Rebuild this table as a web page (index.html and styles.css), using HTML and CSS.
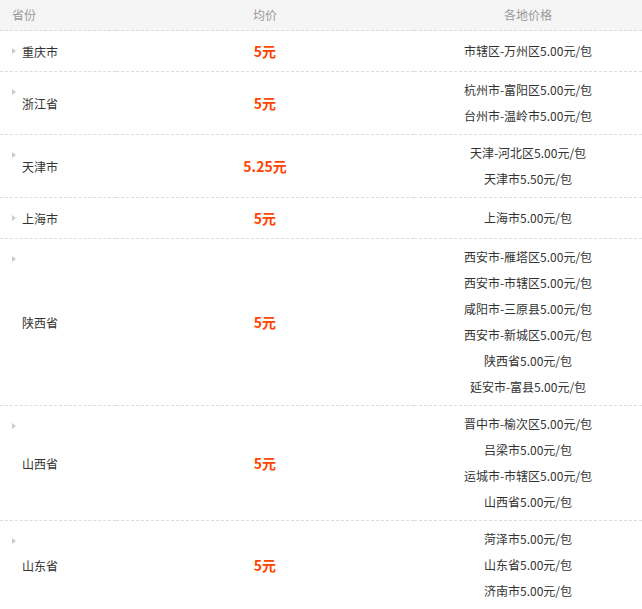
FILE: index.html
```html
<!DOCTYPE html>
<html lang="zh-CN">
<head>
<meta charset="utf-8">
<title>各地价格</title>
<link rel="stylesheet" href="styles.css">
</head>
<body>
<table class="price-table">
  <colgroup>
    <col class="c-prov">
    <col class="c-avg">
    <col class="c-list">
  </colgroup>
  <thead>
    <tr>
      <th class="h-prov">省份</th>
      <th>均价</th>
      <th>各地价格</th>
    </tr>
  </thead>
  <tbody>
    <tr>
      <td class="prov">重庆市</td>
      <td class="avg">5元</td>
      <td class="list"><p>市辖区-万州区5.00元/包</p></td>
    </tr>
    <tr>
      <td class="prov">浙江省</td>
      <td class="avg">5元</td>
      <td class="list"><p>杭州市-富阳区5.00元/包</p><p>台州市-温岭市5.00元/包</p></td>
    </tr>
    <tr>
      <td class="prov">天津市</td>
      <td class="avg">5.25元</td>
      <td class="list"><p>天津-河北区5.00元/包</p><p>天津市5.50元/包</p></td>
    </tr>
    <tr>
      <td class="prov">上海市</td>
      <td class="avg">5元</td>
      <td class="list"><p>上海市5.00元/包</p></td>
    </tr>
    <tr>
      <td class="prov">陕西省</td>
      <td class="avg">5元</td>
      <td class="list"><p>西安市-雁塔区5.00元/包</p><p>西安市-市辖区5.00元/包</p><p>咸阳市-三原县5.00元/包</p><p>西安市-新城区5.00元/包</p><p>陕西省5.00元/包</p><p>延安市-富县5.00元/包</p></td>
    </tr>
    <tr>
      <td class="prov">山西省</td>
      <td class="avg">5元</td>
      <td class="list"><p>晋中市-榆次区5.00元/包</p><p>吕梁市5.00元/包</p><p>运城市-市辖区5.00元/包</p><p>山西省5.00元/包</p></td>
    </tr>
    <tr>
      <td class="prov">山东省</td>
      <td class="avg">5元</td>
      <td class="list"><p>菏泽市5.00元/包</p><p>山东省5.00元/包</p><p>济南市5.00元/包</p></td>
    </tr>
  </tbody>
</table>
</body>
</html>
```

FILE: styles.css
```css
html, body {
  margin: 0;
  padding: 0;
  background: #fff;
}
body {
  font-family: "Noto Sans CJK SC", "Noto Sans", sans-serif;
  font-size: 12px;
  color: #333;
}
.price-table {
  width: 642px;
  border-collapse: collapse;
  table-layout: fixed;
}
.c-prov { width: 116px; }
.c-avg { width: 298px; }
.c-list { width: 228px; }

.price-table th {
  background: #f5f5f5;
  color: #999;
  font-weight: normal;
  height: 30px;
  padding: 0;
  line-height: 30px;
  text-align: center;
  border-bottom: 1px dashed #ddd;
}
.price-table th.h-prov {
  text-align: left;
  padding-left: 12px;
}
.price-table td {
  height: 30px;
  padding: 5px 0;
  border-bottom: 1px dashed #ddd;
  vertical-align: middle;
  text-align: center;
}
.price-table td.prov {
  position: relative;
  text-align: left;
  padding-left: 22px;
}
.price-table td.prov::before {
  content: "";
  position: absolute;
  left: 12px;
  top: 17px;
  width: 0;
  height: 0;
  border-left: 4px solid #ccc;
  border-top: 3px solid transparent;
  border-bottom: 3px solid transparent;
}
.price-table td.avg {
  color: #ff4400;
  font-weight: bold;
  font-size: 14px;
}
.price-table td.list p {
  margin: 0;
  line-height: 26px;
}
```
